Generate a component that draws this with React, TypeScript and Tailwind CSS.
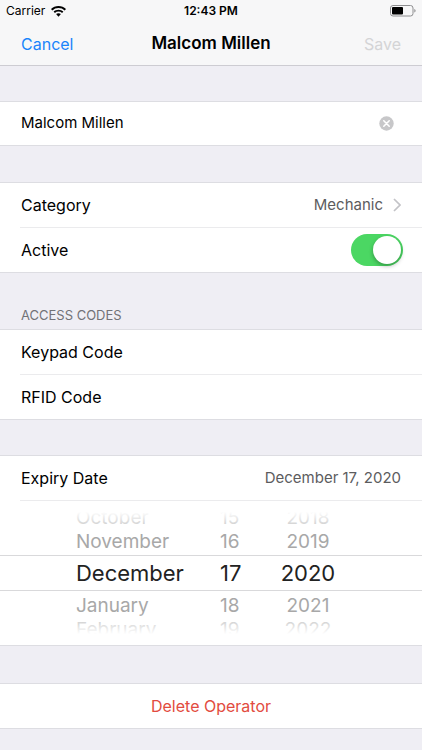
// src/App.tsx
import React, { useRef, useState } from 'react';

const MONTHS = [
    'January', 'February', 'March', 'April', 'May', 'June',
    'July', 'August', 'September', 'October', 'November', 'December',
];

// Look of the five visible wheel rows, top to bottom
const WHEEL_ROWS = [
    { offset: -2, style: 'h-4 text-[19px] text-[#b5b5b5]' },
    { offset: -1, style: 'h-8 text-[19px] text-[#a8a8a8]' },
    { offset: 0, style: 'h-8 text-[22px] text-[#222222]' },
    { offset: 1, style: 'h-8 text-[19px] text-[#a8a8a8]' },
    { offset: 2, style: 'h-4 text-[19px] text-[#b5b5b5]' },
];

// Wraps a number into 0..size-1
const wrap = (value: number, size: number) => ((value % size) + size) % size;

// --- Icons ---

const WifiIcon = () => (
    <svg className="w-[15px] h-[11px]" viewBox="0 0 15 11" fill="currentColor" aria-hidden="true">
        <path d="M7.5 0C4.6 0 2 1.1 0 3l1.3 1.4a9 9 0 0 1 12.4 0L15 3C13 1.1 10.4 0 7.5 0z" />
        <path d="M7.5 3.7c-1.9 0-3.6.7-4.9 1.9l1.3 1.4a5.3 5.3 0 0 1 7.2 0l1.3-1.4a7.2 7.2 0 0 0-4.9-1.9z" />
        <path d="M7.5 7.2c-.9 0-1.7.3-2.4.9l2.4 2.6 2.4-2.6c-.7-.6-1.5-.9-2.4-.9z" />
    </svg>
);

const BatteryIcon = () => (
    <svg className="w-[26px] h-3" viewBox="0 0 26 12" aria-hidden="true">
        <rect x="0.5" y="0.5" width="22.5" height="10.5" rx="2.5" fill="none" stroke="#8e8e90" />
        <rect x="2" y="2" width="11" height="7.5" rx="1" fill="#000" />
        <path d="M24.3 4v3.6c.8-.3 1.3-1 1.3-1.8s-.5-1.5-1.3-1.8z" fill="#8e8e90" />
    </svg>
);

const ClearIcon = () => (
    <svg className="w-[15px] h-[15px]" viewBox="0 0 15 15" aria-hidden="true">
        <circle cx="7.5" cy="7.5" r="7.2" fill="#c7c7c9" />
        <path d="M4.8 4.8l5.4 5.4M10.2 4.8l-5.4 5.4" stroke="#fff" strokeWidth="1.6" strokeLinecap="round" />
    </svg>
);

const ChevronIcon = () => (
    <svg className="w-2 h-[14px]" viewBox="0 0 8 14" fill="none" aria-hidden="true">
        <path d="M1 1l6 6-6 6" stroke="#c3c3c7" strokeWidth="1.7" />
    </svg>
);

// --- Layout helpers ---

const Group: React.FC<{ children: React.ReactNode }> = ({ children }) => (
    <section className="bg-white border-y border-[#dddde2]">{children}</section>
);

const Divider = () => <div className="ml-5 h-px bg-[#ebebed]" />;

interface WheelProps {
    label: string;
    className: string;
    valueAt: (offset: number) => string | number;
    onMove: (offset: number) => void;
}

const Wheel: React.FC<WheelProps> = ({ label, className, valueAt, onMove }) => (
    <div role="group" aria-label={label} className={`flex flex-col ${className}`}>
        {WHEEL_ROWS.map(({ offset, style }) => (
            <button
                key={offset}
                type="button"
                onClick={() => onMove(offset)}
                className={`flex items-center whitespace-nowrap leading-none ${style}`}
            >
                {valueAt(offset)}
            </button>
        ))}
    </div>
);

const App: React.FC = () => {
    const [name, setName] = useState('Malcom Millen');
    const [active, setActive] = useState(true);
    const [month, setMonth] = useState(11);
    const [day, setDay] = useState(17);
    const [year, setYear] = useState(2020);
    const nameRef = useRef<HTMLInputElement>(null);

    const daysInMonth = new Date(year, month + 1, 0).getDate();
    const shownDay = Math.min(day, daysInMonth);
    const dayAt = (offset: number) => wrap(shownDay - 1 + offset, daysInMonth) + 1;

    const clearName = () => {
        setName('');
        nameRef.current?.focus();
    };

    return (
        <div className="min-h-screen bg-[#efeef4] font-['Inter','Liberation_Sans',sans-serif] text-base text-black">
            {/* ---------- STATUS BAR + NAVIGATION ---------- */}
            <header className="bg-[#f7f7f8] border-b border-[#cdccd2]">
                <div className="grid grid-cols-3 items-center h-[22px] px-[6px] text-xs">
                    <div className="flex items-center gap-[6px]">
                        <span>Carrier</span>
                        <WifiIcon />
                    </div>
                    <span className="text-center font-semibold">12:43 PM</span>
                    <div className="flex justify-end">
                        <BatteryIcon />
                    </div>
                </div>
                <div className="grid grid-cols-[1fr_auto_1fr] items-center h-[43px] px-[21px]">
                    <button type="button" className="justify-self-start text-[#1a84fb]">Cancel</button>
                    <h1 className="text-[17px] font-semibold">Malcom Millen</h1>
                    <button type="button" disabled className="justify-self-end text-[#d4d4d6]">Save</button>
                </div>
            </header>

            <main>
                {/* ---------- NAME ---------- */}
                <div className="pt-[35px]">
                    <Group>
                        <div className="flex items-center h-[43px] pl-[21px] pr-7">
                            <input
                                ref={nameRef}
                                type="text"
                                aria-label="Operator name"
                                value={name}
                                onChange={(e) => setName(e.target.value)}
                                className="flex-1 min-w-0 text-[15px] outline-none"
                            />
                            <button type="button" aria-label="Clear name" onClick={clearName}>
                                <ClearIcon />
                            </button>
                        </div>
                    </Group>
                </div>

                {/* ---------- CATEGORY / ACTIVE ---------- */}
                <div className="pt-9">
                    <Group>
                        <button type="button" className="flex items-center w-full h-11 px-[21px]">
                            <span className="flex-1 text-left">Category</span>
                            <span className="mr-[10px] text-[15px] text-[#5c5c5e]">Mechanic</span>
                            <ChevronIcon />
                        </button>
                        <Divider />
                        <div className="flex items-center h-11 pl-[21px] pr-[19px]">
                            <label htmlFor="active" className="flex-1">Active</label>
                            <input
                                id="active"
                                type="checkbox"
                                role="switch"
                                checked={active}
                                onChange={(e) => setActive(e.target.checked)}
                                className="appearance-none flex items-center w-[52px] h-8 p-[2px] rounded-full bg-[#e5e5ea] checked:bg-[#4bd763] before:block before:size-7 before:rounded-full before:bg-white before:shadow-[0_2px_4px_rgba(0,0,0,0.3)] checked:before:ml-auto"
                            />
                        </div>
                    </Group>
                </div>

                {/* ---------- ACCESS CODES ---------- */}
                <h2 className="flex items-end h-14 px-[21px] pb-[6px] text-[13px] leading-4 text-[#727277]">ACCESS CODES</h2>
                <Group>
                    <div className="flex items-center h-11 px-[21px]">
                        <label htmlFor="keypad">Keypad Code</label>
                        <input id="keypad" type="text" className="flex-1 min-w-0 text-right text-[15px] text-[#5c5c5e] outline-none" />
                    </div>
                    <Divider />
                    <div className="flex items-center h-11 px-[21px]">
                        <label htmlFor="rfid">RFID Code</label>
                        <input id="rfid" type="text" className="flex-1 min-w-0 text-right text-[15px] text-[#5c5c5e] outline-none" />
                    </div>
                </Group>

                {/* ---------- EXPIRY DATE ---------- */}
                <div className="pt-[35px]">
                    <Group>
                        <div className="flex items-center justify-between h-11 px-[21px]">
                            <span>Expiry Date</span>
                            <span className="text-[15px] text-[#5c5c5e]">{MONTHS[month]} {shownDay}, {year}</span>
                        </div>
                        <Divider />
                        <div className="relative py-2">
                            <div className="flex pl-[18%]">
                                <Wheel
                                    label="Month"
                                    className="w-36"
                                    valueAt={(offset) => MONTHS[wrap(month + offset, 12)]}
                                    onMove={(offset) => setMonth(wrap(month + offset, 12))}
                                />
                                <Wheel
                                    label="Day"
                                    className="w-[60px]"
                                    valueAt={dayAt}
                                    onMove={(offset) => setDay(dayAt(offset))}
                                />
                                <Wheel
                                    label="Year"
                                    className="w-[56px] items-center"
                                    valueAt={(offset) => year + offset}
                                    onMove={(offset) => setYear(year + offset)}
                                />
                            </div>
                            {/* Fades the wheel ends and marks the selected row */}
                            <div className="absolute inset-0 flex flex-col pointer-events-none">
                                <div className="flex-1 bg-linear-to-b from-white from-20% to-transparent to-60%" />
                                <div className="h-9 border-y border-[#d9d9db]" />
                                <div className="flex-1 bg-linear-to-t from-white from-20% to-transparent to-60%" />
                            </div>
                        </div>
                    </Group>
                </div>

                {/* ---------- DELETE ---------- */}
                <div className="pt-[37px] pb-5">
                    <Group>
                        <button type="button" className="w-full h-11 text-center text-[#e24b40]">Delete Operator</button>
                    </Group>
                </div>
            </main>
        </div>
    );
};

export default App;
